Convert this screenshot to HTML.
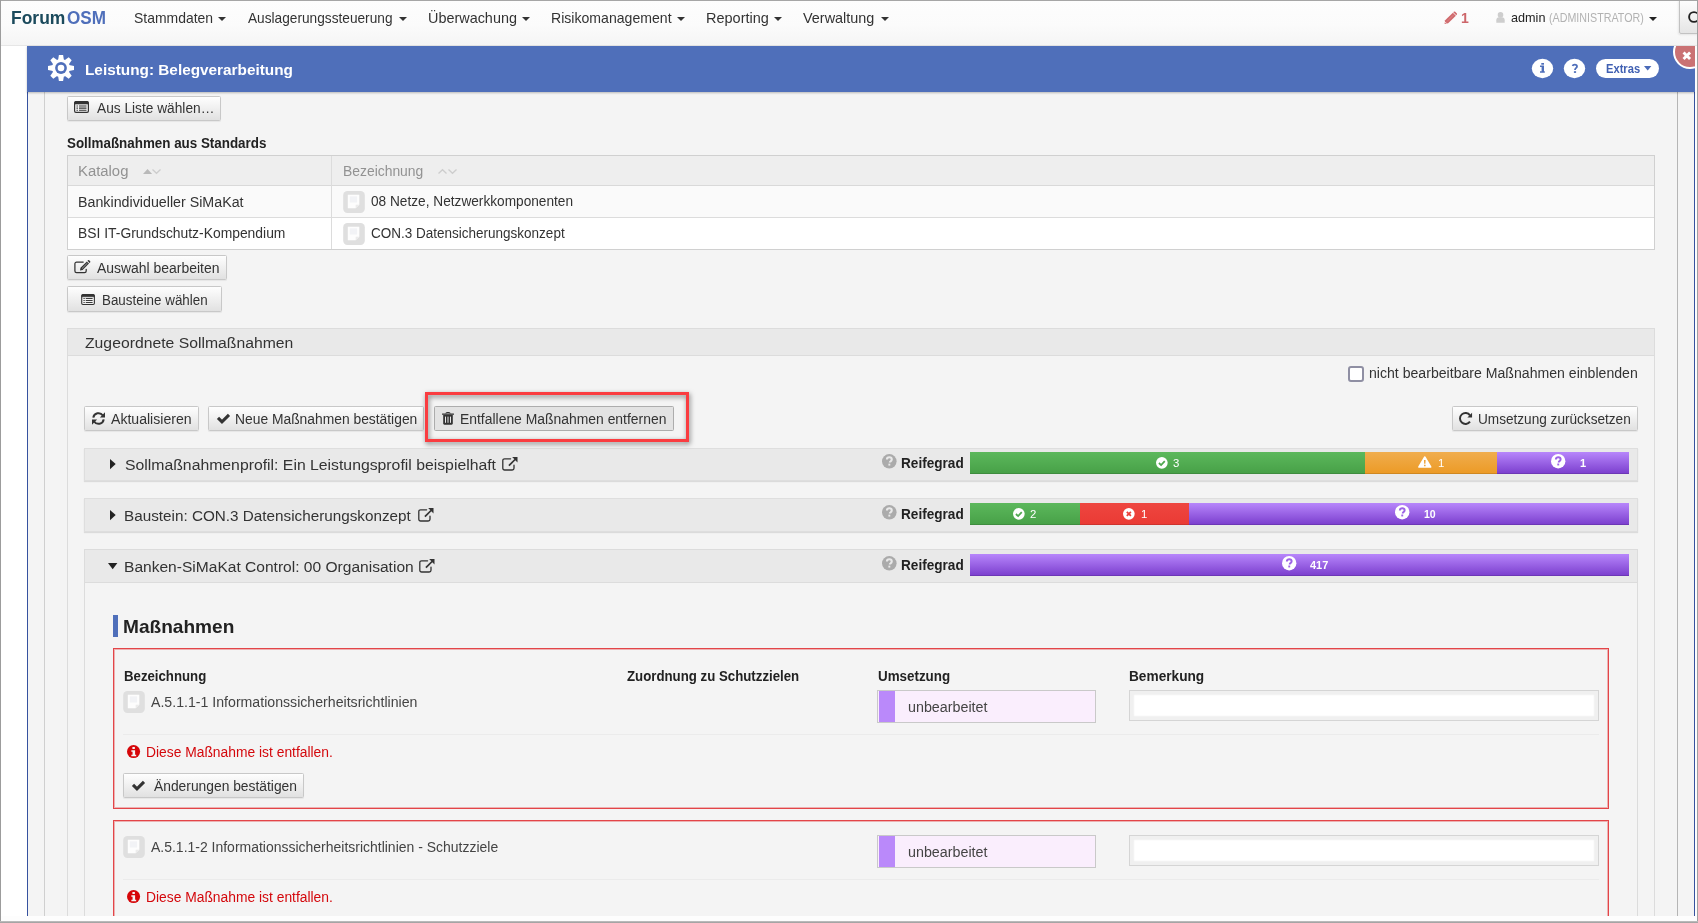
<!DOCTYPE html>
<html lang="de"><head><meta charset="utf-8"><title>ForumOSM - Leistung: Belegverarbeitung</title>
<style>
html,body{margin:0;padding:0}
body{width:1698px;height:923px;position:relative;overflow:hidden;background:#fff;font-family:"Liberation Sans", sans-serif;}
body div,body span,body svg{position:absolute;display:block}
span{white-space:nowrap;line-height:20px;transform-origin:0 0}
svg{overflow:visible}
</style></head>
<body>
<div style="left:0px;top:0px;width:1698px;height:46px;background:linear-gradient(#fdfdfd 0%,#fbfbfb 55%,#f5f5f5 100%);border-bottom:1px solid #e6e6e6;box-sizing:border-box;"></div>
<span style="left:11.03px;top:8px;font-size:18px;font-weight:700;color:#1b4a5c;transform:scaleX(0.9705);">Forum</span>
<span style="left:67.2px;top:8px;font-size:18px;font-weight:700;color:#4f6fba;transform:scaleX(0.9498);">OSM</span>
<span style="left:133.6px;top:8px;font-size:14.4px;color:#333;transform:scaleX(0.9696);">Stammdaten</span>
<svg style="left:218px;top:17px;" width="8" height="4" viewBox="0 0 8 4"><path d="M0 0H8L4 4Z" fill="#333"/></svg>
<span style="left:248.3px;top:8px;font-size:14.4px;color:#333;transform:scaleX(0.9506);">Auslagerungssteuerung</span>
<svg style="left:398.5px;top:17px;" width="8" height="4" viewBox="0 0 8 4"><path d="M0 0H8L4 4Z" fill="#333"/></svg>
<span style="left:427.6px;top:8px;font-size:14.4px;color:#333;transform:scaleX(1.0015);">Überwachung</span>
<svg style="left:521.9px;top:17px;" width="8" height="4" viewBox="0 0 8 4"><path d="M0 0H8L4 4Z" fill="#333"/></svg>
<span style="left:550.92px;top:8px;font-size:14.4px;color:#333;transform:scaleX(0.9789);">Risikomanagement</span>
<svg style="left:677px;top:17px;" width="8" height="4" viewBox="0 0 8 4"><path d="M0 0H8L4 4Z" fill="#333"/></svg>
<span style="left:706.09px;top:8px;font-size:14.4px;color:#333;transform:scaleX(1.0066);">Reporting</span>
<svg style="left:774px;top:17px;" width="8" height="4" viewBox="0 0 8 4"><path d="M0 0H8L4 4Z" fill="#333"/></svg>
<span style="left:803.4px;top:8px;font-size:14.4px;color:#333;transform:scaleX(1.0015);">Verwaltung</span>
<svg style="left:880.9px;top:17px;" width="8" height="4" viewBox="0 0 8 4"><path d="M0 0H8L4 4Z" fill="#333"/></svg>
<svg style="left:1443.8px;top:10.8px;" width="13.5" height="13.5" viewBox="0 0 14 14"><path d="M9.2 1.7 12.3 4.8 4.3 12.8 0.6 13.4 1.2 9.7z" fill="#d0696c"/><path d="M10.1 .8a1.1 1.1 0 0 1 1.5 0l1.6 1.6a1.1 1.1 0 0 1 0 1.5l-.5.5-3.1-3.1z" fill="#d0696c"/><path d="M1 11.2l1.8 1.8" stroke="#fbeaea" stroke-width=".9"/><path d="M3.3 10.7 10.2 3.8" stroke="#e9b3b4" stroke-width=".7" stroke-dasharray="1 .7"/></svg>
<span style="left:1460.65px;top:8px;font-size:14px;font-weight:700;color:#cd666a;transform:scaleX(1.0015);">1</span>
<svg style="left:1495.5px;top:12.4px;" width="9" height="10.8" viewBox="0 0 9 10.8"><circle cx="4.5" cy="2.9" r="2.8" fill="#cecece"/><path d="M.3 10.7V8.3C.3 6.4 1.5 5.3 3 5.3h3c1.5 0 2.7 1.1 2.7 3v2.4z" fill="#cecece"/></svg>
<span style="left:1510.8px;top:8px;font-size:13px;color:#222;transform:scaleX(0.9722);">admin</span>
<span style="left:1549px;top:8px;font-size:12.7px;color:#b2b2b2;transform:scaleX(0.8441);">(ADMINISTRATOR)</span>
<svg style="left:1649px;top:17px;" width="8" height="4" viewBox="0 0 8 4"><path d="M0 0H8L4 4Z" fill="#222"/></svg>
<div style="left:1679px;top:0px;width:20px;height:34px;background:linear-gradient(#fdfdfd,#e5e5e5);border:1px solid #c2c2c2;border-radius:0 0 0 2px;box-sizing:border-box;box-shadow:-1px 1px 2px rgba(0,0,0,.08);"></div>
<svg style="left:1686px;top:9px;" width="16" height="16" viewBox="0 0 16 16"><circle cx="8" cy="8" r="4.9" fill="none" stroke="#222" stroke-width="1.9"/></svg>
<div style="left:27px;top:46px;width:1668px;height:870px;background:#f4f4f4;border-left:1px solid #36529f;border-right:1px solid #36529f;box-sizing:border-box;"></div>
<div style="left:44px;top:92px;width:1px;height:824px;background:#cfcfcf;"></div>
<div style="left:1677px;top:92px;width:1px;height:824px;background:#b5b5b5;"></div>
<div style="left:27px;top:46px;width:1668px;height:46px;background:#4f6fba;box-shadow:0 1px 2px rgba(0,0,0,.25);"></div>
<svg style="left:48.3px;top:55.3px;" width="26" height="26" viewBox="0 0 26 26"><g transform="translate(13 13)" fill="#fff"><path d="M-2.9 -8L-2.1 -13H2.1L2.9 -8z" transform="rotate(0)"/><path d="M-2.9 -8L-2.1 -13H2.1L2.9 -8z" transform="rotate(45)"/><path d="M-2.9 -8L-2.1 -13H2.1L2.9 -8z" transform="rotate(90)"/><path d="M-2.9 -8L-2.1 -13H2.1L2.9 -8z" transform="rotate(135)"/><path d="M-2.9 -8L-2.1 -13H2.1L2.9 -8z" transform="rotate(180)"/><path d="M-2.9 -8L-2.1 -13H2.1L2.9 -8z" transform="rotate(225)"/><path d="M-2.9 -8L-2.1 -13H2.1L2.9 -8z" transform="rotate(270)"/><path d="M-2.9 -8L-2.1 -13H2.1L2.9 -8z" transform="rotate(315)"/><circle r="9.1"/><circle r="5.9" fill="#4f6fba"/><circle r="3.3" fill="#fff"/></g></svg>
<span style="left:85.31px;top:60px;font-size:15.5px;font-weight:700;color:#fff;transform:scaleX(0.9896);">Leistung: Belegverarbeitung</span>
<svg style="left:1531px;top:58px" width="23" height="21" viewBox="0 0 23 21"><ellipse cx="11.5" cy="10.5" rx="10.7" ry="9.7" fill="#fff"/><rect x="10.3" y="5" width="2.7" height="1.7" fill="#4f6fba"/><path d="M9 7.5h4v5.7h.8v1.6H9v-1.6h1.6V9.1H9z" fill="#4f6fba"/></svg>
<svg style="left:1563px;top:58px" width="23" height="21" viewBox="0 0 23 21"><ellipse cx="11.5" cy="10.5" rx="10.7" ry="9.7" fill="#fff"/><path d="M9.6 8c.2-.9 1-1.3 2.1-1.3 1.4 0 2.3.7 2.3 1.7 0 .8-.5 1.2-1.1 1.7-.6.5-.9.9-.9 1.8" fill="none" stroke="#4f6fba" stroke-width="1.8"/><rect x="10.9" y="13.2" width="2.2" height="1.7" fill="#4f6fba"/></svg>
<div style="left:1595.7px;top:58.6px;width:63.4px;height:19.5px;background:#fff;border-radius:10px;"></div>
<span style="left:1605.7px;top:59px;font-size:12.4px;font-weight:700;color:#4060b2;transform:scaleX(0.9001);">Extras</span>
<svg style="left:1643.7px;top:66.1px;" width="7.4" height="4.6" viewBox="0 0 7.4 4.6"><path d="M0 0H7.4L3.7 4.6Z" fill="#4a6ab8"/></svg>
<div style="left:1665px;top:46px;width:30px;height:30px;overflow:hidden;"><div style="left:8.1px;top:-10.9px;width:33.8px;height:33.8px;border-radius:50%;background:#ca7274;border:2px solid #fff;box-sizing:border-box;"></div><svg style="left:16.9px;top:5.2px" width="9.6" height="9.6" viewBox="0 0 10 10"><path d="M1.6 1.6 8.4 8.4M8.4 1.6 1.6 8.4" stroke="#fff" stroke-width="3"/></svg></div>
<div style="left:67px;top:96px;width:154px;height:25px;background:linear-gradient(#fefefe,#e1e1e1);border:1px solid #c8c8c8;box-shadow:0 1px 1px rgba(0,0,0,.06);border-radius:1.5px;box-sizing:border-box;"></div>
<svg style="left:74.1px;top:101.2px;" width="15" height="12" viewBox="0 0 15 12"><rect x="0.6" y="0.6" width="13.8" height="10.8" rx="1.3" fill="#f4f4f4" stroke="#333" stroke-width="1.2"/><path d="M.6 3V1.9A1.3 1.3 0 0 1 1.9 .6h11.2a1.3 1.3 0 0 1 1.3 1.3V3z" fill="#333" stroke="#333" stroke-width=".6"/><path d="M2.5 4.9h1.4M5 4.9h7.5M2.5 7.1h1.4M5 7.1h7.5M2.5 9.3h1.4M5 9.3h7.5" stroke="#333" stroke-width="1.05"/></svg>
<span style="left:96.7px;top:99px;font-size:13.8px;color:#333;transform:scaleX(0.9939);">Aus Liste wählen…</span>
<span style="left:67.3px;top:134px;font-size:13.8px;font-weight:700;color:#222;transform:scaleX(0.9704);">Sollmaßnahmen aus Standards</span>
<div style="left:67px;top:155px;width:1588px;height:95px;border:1px solid #d0d0d0;box-sizing:border-box;background:#fff;"></div>
<div style="left:68px;top:156px;width:1586px;height:30px;background:#eeeeee;border-bottom:1px solid #d9d9d9;box-sizing:border-box;"></div>
<div style="left:68px;top:186px;width:1586px;height:31px;background:#fafafa;"></div>
<div style="left:68px;top:217px;width:1586px;height:1px;background:#dcdcdc;"></div>
<div style="left:331px;top:156px;width:1px;height:93px;background:#dcdcdc;"></div>
<span style="left:78.32px;top:162px;font-size:13.8px;color:#929292;transform:scaleX(1.0771);">Katalog</span>
<span style="left:342.89px;top:162px;font-size:13.8px;color:#929292;transform:scaleX(1.0064);">Bezeichnung</span>
<svg style="left:142.6px;top:168.8px;" width="9.1" height="5.1" viewBox="0 0 9 5"><path d="M0 5 4.5 0 9 5z" fill="#b9b9b9"/></svg>
<svg style="left:152.3px;top:168.7px;" width="9" height="5" viewBox="0 0 9 5"><path d="M.5 .5 4.5 4.3 8.5 .5" fill="none" stroke="#cdcdcd" stroke-width="1.3"/></svg>
<svg style="left:438px;top:168.7px;" width="9" height="5" viewBox="0 0 9 5"><path d="M.5 4.5 4.5 .7 8.5 4.5" fill="none" stroke="#cdcdcd" stroke-width="1.3"/></svg>
<svg style="left:448px;top:168.7px;" width="9" height="5" viewBox="0 0 9 5"><path d="M.5 .5 4.5 4.3 8.5 .5" fill="none" stroke="#cdcdcd" stroke-width="1.3"/></svg>
<span style="left:78.47px;top:193px;font-size:13.8px;color:#333;transform:scaleX(1.0329);">Bankindividueller SiMaKat</span>
<span style="left:78.39px;top:224px;font-size:13.8px;color:#333;transform:scaleX(1.0055);">BSI IT-Grundschutz-Kompendium</span>
<svg style="left:343px;top:190.8px" width="22" height="22" viewBox="0 0 22 22"><rect x=".2" y="0" width="21.6" height="22" rx="4.2" fill="#dfdfdf"/><path d="M4.8 3.7h11.5v10l-3.7 3.6H4.8z" fill="#fdfdfd"/><rect x="6.8" y="5.3" width="7.3" height="6.2" fill="#f2f3f6"/><path d="M12.6 17.3v-3.6h3.7z" fill="#ececec"/></svg>
<svg style="left:343px;top:222.6px" width="22" height="22" viewBox="0 0 22 22"><rect x=".2" y="0" width="21.6" height="22" rx="4.2" fill="#dfdfdf"/><path d="M4.8 3.7h11.5v10l-3.7 3.6H4.8z" fill="#fdfdfd"/><rect x="6.8" y="5.3" width="7.3" height="6.2" fill="#f2f3f6"/><path d="M12.6 17.3v-3.6h3.7z" fill="#ececec"/></svg>
<span style="left:370.9px;top:192px;font-size:13.8px;color:#333;transform:scaleX(0.9905);">08 Netze, Netzwerkkomponenten</span>
<span style="left:370.9px;top:224px;font-size:13.8px;color:#333;transform:scaleX(0.9787);">CON.3 Datensicherungskonzept</span>
<div style="left:67px;top:255px;width:160px;height:25px;background:linear-gradient(#fefefe,#e1e1e1);border:1px solid #c8c8c8;box-shadow:0 1px 1px rgba(0,0,0,.06);border-radius:1.5px;box-sizing:border-box;"></div>
<svg style="left:74px;top:260.2px;" width="16" height="14" viewBox="0 0 16 14"><path d="M12.2 9.3v1.7a1.7 1.7 0 0 1-1.7 1.7H2.6A1.7 1.7 0 0 1 .9 11V3.8a1.7 1.7 0 0 1 1.7-1.7h6.6" fill="none" stroke="#333" stroke-width="1.25" stroke-linecap="round"/><path d="M6 10.4l.5-2.6L12.9 1.4l2.1 2.1L8.6 9.9z" fill="#333"/><path d="M13.5.8l.5-.5a.8.8 0 0 1 1.1 0l1 1a.8.8 0 0 1 0 1.1l-.5.5z" fill="#333"/><path d="M7.9 8.6 13.5 3" stroke="#e9e9e9" stroke-width=".6"/></svg>
<span style="left:96.7px;top:259px;font-size:13.8px;color:#333;transform:scaleX(1.0107);">Auswahl bearbeiten</span>
<div style="left:67px;top:286px;width:155px;height:26px;background:linear-gradient(#fefefe,#e1e1e1);border:1px solid #c8c8c8;box-shadow:0 1px 1px rgba(0,0,0,.06);border-radius:1.5px;box-sizing:border-box;"></div>
<svg style="left:80.9px;top:294.1px;" width="14.1" height="11" viewBox="0 0 15 12"><rect x="0.6" y="0.6" width="13.8" height="10.8" rx="1.3" fill="#f4f4f4" stroke="#333" stroke-width="1.2"/><path d="M.6 3V1.9A1.3 1.3 0 0 1 1.9 .6h11.2a1.3 1.3 0 0 1 1.3 1.3V3z" fill="#333" stroke="#333" stroke-width=".6"/><path d="M2.5 4.9h1.4M5 4.9h7.5M2.5 7.1h1.4M5 7.1h7.5M2.5 9.3h1.4M5 9.3h7.5" stroke="#333" stroke-width="1.05"/></svg>
<span style="left:101.63px;top:291px;font-size:13.8px;color:#333;transform:scaleX(0.9697);">Bausteine wählen</span>
<div style="left:67px;top:328px;width:1588px;height:600px;border:1px solid #dcdcdc;box-sizing:border-box;"></div>
<div style="left:68px;top:329px;width:1586px;height:27px;background:#e9e9e9;border-bottom:1px solid #dcdcdc;box-sizing:border-box;"></div>
<span style="left:84.9px;top:333px;font-size:15.2px;color:#333;transform:scaleX(1.0365);">Zugeordnete Sollmaßnahmen</span>
<div style="left:1347.5px;top:366px;width:16px;height:16px;border:2px solid #8f8fa3;border-radius:3px;background:#fff;box-sizing:border-box;"></div>
<span style="left:1369.1px;top:364px;font-size:13.8px;color:#333;transform:scaleX(1.0217);">nicht bearbeitbare Maßnahmen einblenden</span>
<div style="left:84px;top:406px;width:115px;height:25px;background:linear-gradient(#fefefe,#e1e1e1);border:1px solid #c8c8c8;box-shadow:0 1px 1px rgba(0,0,0,.06);border-radius:1.5px;box-sizing:border-box;"></div>
<svg style="left:91.8px;top:411.9px;" width="13" height="13" viewBox="0 0 13 13"><path d="M1.3 5.7A5.3 5.3 0 0 1 10.9 3.5" fill="none" stroke="#333" stroke-width="2"/><path d="M11.7 7.3A5.3 5.3 0 0 1 2.1 9.5" fill="none" stroke="#333" stroke-width="2"/><path d="M13 .3v5.1H7.9z" fill="#333"/><path d="M0 12.7V7.6h5.1z" fill="#333"/></svg>
<span style="left:110.6px;top:410px;font-size:13.8px;color:#333;transform:scaleX(1.0202);">Aktualisieren</span>
<div style="left:208px;top:406px;width:216px;height:25px;background:linear-gradient(#fefefe,#e1e1e1);border:1px solid #c8c8c8;box-shadow:0 1px 1px rgba(0,0,0,.06);border-radius:1.5px;box-sizing:border-box;"></div>
<svg style="left:216.9px;top:413.8px;" width="13.2" height="10.4" viewBox="0 0 13.2 10.4"><path d="M1 3.8 5 7.8 12 .9" fill="none" stroke="#333" stroke-width="3.1"/></svg>
<span style="left:234.7px;top:410px;font-size:13.8px;color:#333;transform:scaleX(1.0028);">Neue Maßnahmen bestätigen</span>
<div style="left:434px;top:406px;width:240px;height:25px;background:#e3e3e3;border:1px solid #adadad;border-radius:1.5px;box-sizing:border-box;"></div>
<svg style="left:441.5px;top:412px;" width="12" height="13" viewBox="0 0 12 13"><path d="M4 1.6V1c0-.3.2-.5.5-.5h3c.3 0 .5.2.5.5v.600" fill="none" stroke="#333" stroke-width="1"/><rect x="0" y="1.5" width="12" height="1.3" rx=".3" fill="#333"/><path d="M1.2 2.8h9.6v8.8c0 .7-.5 1.2-1.2 1.2H2.4c-.7 0-1.2-.5-1.2-1.2z" fill="#333"/><path d="M3.5 4.6v6.2M6 4.6v6.2M8.5 4.6v6.2" stroke="#e8e8e8" stroke-width="1"/></svg>
<span style="left:460.49px;top:410px;font-size:13.8px;color:#333;transform:scaleX(1.0078);">Entfallene Maßnahmen entfernen</span>
<div style="left:1452px;top:406px;width:186px;height:25px;background:linear-gradient(#fefefe,#e1e1e1);border:1px solid #c8c8c8;box-shadow:0 1px 1px rgba(0,0,0,.06);border-radius:1.5px;box-sizing:border-box;"></div>
<svg style="left:1459px;top:411.9px;" width="13.2" height="13.2" viewBox="0 0 13.2 13.2"><path d="M11 9.65A5.5 5.5 0 1 1 11 3.35" fill="none" stroke="#333" stroke-width="1.95"/><path d="M13.1 .8v4.7H8.4z" fill="#333"/></svg>
<span style="left:1478.11px;top:410px;font-size:13.8px;color:#333;transform:scaleX(0.9861);">Umsetzung zurücksetzen</span>
<div style="left:84px;top:448px;width:1554px;height:33px;background:#e9e9e9;border:1px solid #dedede;box-sizing:border-box;box-shadow:0 1px 1px rgba(0,0,0,.10);"></div>
<svg style="left:110px;top:459px;" width="5.7" height="10.2" viewBox="0 0 5.7 10.2"><path d="M0 0V10.2L5.7 5.1Z" fill="#222"/></svg>
<span style="left:124.8px;top:455px;font-size:15.2px;color:#333;transform:scaleX(1.0389);">Sollmaßnahmenprofil: Ein Leistungsprofil beispielhaft</span>
<svg style="left:502px;top:457px;" width="16" height="14" viewBox="0 0 16 14"><path d="M12 8.2v3a1.8 1.8 0 0 1-1.8 1.8H2.6A1.8 1.8 0 0 1 .8 11.2V3.6A1.8 1.8 0 0 1 2.6 1.8h6" fill="none" stroke="#333" stroke-width="1.3" stroke-linecap="round"/><path d="M6.9 8.7 13.6 2" stroke="#333" stroke-width="1.7"/><path d="M10.2 .1h5.3v5.3z" fill="#333"/></svg>
<svg style="left:881.8px;top:453.5px" width="14.6" height="14.6" viewBox="0 0 16 16"><circle cx="8" cy="8" r="8" fill="#ababab"/><path d="M5.4 6.1c0-1.6 1.2-2.5 2.7-2.5s2.6.9 2.6 2.3c0 1.1-.6 1.6-1.3 2.1-.6.4-.8.7-.8 1.4" fill="none" stroke="#e9e9e9" stroke-width="2.3"/><rect x="7" y="10.6" width="2.1" height="2.1" fill="#e9e9e9"/></svg>
<span style="left:901.4px;top:454px;font-size:13.8px;font-weight:700;color:#222;transform:scaleX(0.9856);">Reifegrad</span>
<div style="left:84px;top:498px;width:1554px;height:34px;background:#e9e9e9;border:1px solid #dedede;box-sizing:border-box;box-shadow:0 1px 1px rgba(0,0,0,.10);"></div>
<svg style="left:110px;top:510px;" width="5.7" height="10.2" viewBox="0 0 5.7 10.2"><path d="M0 0V10.2L5.7 5.1Z" fill="#222"/></svg>
<span style="left:123.79px;top:506px;font-size:15.2px;color:#333;transform:scaleX(1.0052);">Baustein: CON.3 Datensicherungskonzept</span>
<svg style="left:418px;top:508px;" width="16" height="14" viewBox="0 0 16 14"><path d="M12 8.2v3a1.8 1.8 0 0 1-1.8 1.8H2.6A1.8 1.8 0 0 1 .8 11.2V3.6A1.8 1.8 0 0 1 2.6 1.8h6" fill="none" stroke="#333" stroke-width="1.3" stroke-linecap="round"/><path d="M6.9 8.7 13.6 2" stroke="#333" stroke-width="1.7"/><path d="M10.2 .1h5.3v5.3z" fill="#333"/></svg>
<svg style="left:881.8px;top:504.5px" width="14.6" height="14.6" viewBox="0 0 16 16"><circle cx="8" cy="8" r="8" fill="#ababab"/><path d="M5.4 6.1c0-1.6 1.2-2.5 2.7-2.5s2.6.9 2.6 2.3c0 1.1-.6 1.6-1.3 2.1-.6.4-.8.7-.8 1.4" fill="none" stroke="#e9e9e9" stroke-width="2.3"/><rect x="7" y="10.6" width="2.1" height="2.1" fill="#e9e9e9"/></svg>
<span style="left:901.4px;top:505px;font-size:13.8px;font-weight:700;color:#222;transform:scaleX(0.9856);">Reifegrad</span>
<div style="left:84px;top:549px;width:1554px;height:400px;border:1px solid #dcdcdc;box-sizing:border-box;"></div>
<div style="left:85px;top:550px;width:1552px;height:33px;background:#e9e9e9;border-bottom:1px solid #dcdcdc;box-sizing:border-box;"></div>
<svg style="left:108px;top:563px;" width="9.4" height="6.2" viewBox="0 0 9.4 6.2"><path d="M0 0H9.4L4.7 6.2Z" fill="#222"/></svg>
<span style="left:123.78px;top:557px;font-size:15.2px;color:#333;transform:scaleX(1.0243);">Banken-SiMaKat Control: 00 Organisation</span>
<svg style="left:419px;top:559px;" width="16" height="14" viewBox="0 0 16 14"><path d="M12 8.2v3a1.8 1.8 0 0 1-1.8 1.8H2.6A1.8 1.8 0 0 1 .8 11.2V3.6A1.8 1.8 0 0 1 2.6 1.8h6" fill="none" stroke="#333" stroke-width="1.3" stroke-linecap="round"/><path d="M6.9 8.7 13.6 2" stroke="#333" stroke-width="1.7"/><path d="M10.2 .1h5.3v5.3z" fill="#333"/></svg>
<svg style="left:881.8px;top:555.5px" width="14.6" height="14.6" viewBox="0 0 16 16"><circle cx="8" cy="8" r="8" fill="#ababab"/><path d="M5.4 6.1c0-1.6 1.2-2.5 2.7-2.5s2.6.9 2.6 2.3c0 1.1-.6 1.6-1.3 2.1-.6.4-.8.7-.8 1.4" fill="none" stroke="#e9e9e9" stroke-width="2.3"/><rect x="7" y="10.6" width="2.1" height="2.1" fill="#e9e9e9"/></svg>
<span style="left:901.4px;top:556px;font-size:13.8px;font-weight:700;color:#222;transform:scaleX(0.9856);">Reifegrad</span>
<div style="left:970px;top:452px;width:395px;height:22px;background:linear-gradient(#5cb85c,#47a047);box-shadow:inset 0 -1px 0 rgba(0,0,0,.12);"></div>
<div style="left:1365px;top:452px;width:132px;height:22px;background:linear-gradient(#f0ad4e,#ec9a25);box-shadow:inset 0 -1px 0 rgba(0,0,0,.12);"></div>
<div style="left:1497px;top:452px;width:132px;height:22px;background:linear-gradient(#b786fb,#7a3dcd);box-shadow:inset 0 -1px 0 rgba(0,0,0,.12);"></div>
<svg style="left:1155.5px;top:456.5px" width="11.7" height="11.7" viewBox="0 0 16 16"><circle cx="8" cy="8" r="8" fill="#fff"/><path d="M4 8.2 7 11 12 5.6" fill="none" stroke="#4fa94f" stroke-width="2.4"/></svg>
<span style="left:1173.25px;top:453px;font-size:11.4px;color:#fff;transform:scaleX(1.0015);">3</span>
<svg style="left:1418.2px;top:456px" width="13.6" height="12" viewBox="0 0 16 14"><path d="M8 .3c.5 0 .9.3 1.1.7l6.6 11.3c.4.8-.1 1.5-1 1.5H1.3c-.9 0-1.4-.7-1-1.5L6.9 1C7.1.6 7.5.3 8 .3z" fill="#fff"/><path d="M7 4.6h2l-.3 4.6H7.3z" fill="#eea43a"/><rect x="7.1" y="10.2" width="1.8" height="1.8" fill="#eea43a"/></svg>
<span style="left:1438.3px;top:453px;font-size:11.4px;color:#fff;transform:scaleX(1.0015);">1</span>
<svg style="left:1551.2px;top:454.3px" width="14.4" height="14.4" viewBox="0 0 16 16"><circle cx="8" cy="8" r="8" fill="#fff"/><path d="M5.4 6.1c0-1.6 1.2-2.5 2.7-2.5s2.6.9 2.6 2.3c0 1.1-.6 1.6-1.3 2.1-.6.4-.8.7-.8 1.4" fill="none" stroke="#9d63e6" stroke-width="2.2"/><rect x="7" y="10.6" width="2.1" height="2.1" fill="#9d63e6"/></svg>
<span style="left:1580.1px;top:453px;font-size:11px;font-weight:700;color:#fff;transform:scaleX(1.0015);">1</span>
<div style="left:970px;top:503px;width:110px;height:22px;background:linear-gradient(#5cb85c,#47a047);box-shadow:inset 0 -1px 0 rgba(0,0,0,.12);"></div>
<div style="left:1080px;top:503px;width:109px;height:22px;background:linear-gradient(#ee4640,#ea3a34);box-shadow:inset 0 -1px 0 rgba(0,0,0,.12);"></div>
<div style="left:1189px;top:503px;width:440px;height:22px;background:linear-gradient(#b786fb,#7a3dcd);box-shadow:inset 0 -1px 0 rgba(0,0,0,.12);"></div>
<svg style="left:1012.8px;top:507.5px" width="11.7" height="11.7" viewBox="0 0 16 16"><circle cx="8" cy="8" r="8" fill="#fff"/><path d="M4 8.2 7 11 12 5.6" fill="none" stroke="#4fa94f" stroke-width="2.4"/></svg>
<span style="left:1030.3px;top:504px;font-size:11.4px;color:#fff;transform:scaleX(1.0015);">2</span>
<svg style="left:1122.9px;top:507.5px" width="11.7" height="11.7" viewBox="0 0 16 16"><circle cx="8" cy="8" r="8" fill="#fff"/><path d="M5.2 5.2 10.8 10.8M10.8 5.2 5.2 10.8" fill="none" stroke="#ec3f39" stroke-width="2.4"/></svg>
<span style="left:1140.6px;top:504px;font-size:11.4px;color:#fff;transform:scaleX(1.0015);">1</span>
<svg style="left:1394.6px;top:505.3px" width="14.4" height="14.4" viewBox="0 0 16 16"><circle cx="8" cy="8" r="8" fill="#fff"/><path d="M5.4 6.1c0-1.6 1.2-2.5 2.7-2.5s2.6.9 2.6 2.3c0 1.1-.6 1.6-1.3 2.1-.6.4-.8.7-.8 1.4" fill="none" stroke="#9d63e6" stroke-width="2.2"/><rect x="7" y="10.6" width="2.1" height="2.1" fill="#9d63e6"/></svg>
<span style="left:1423.6px;top:504px;font-size:11px;font-weight:700;color:#fff;transform:scaleX(0.9573);">10</span>
<div style="left:970px;top:554px;width:659px;height:22px;background:linear-gradient(#b786fb,#7a3dcd);box-shadow:inset 0 -1px 0 rgba(0,0,0,.12);"></div>
<svg style="left:1281.5px;top:556.3px" width="14.4" height="14.4" viewBox="0 0 16 16"><circle cx="8" cy="8" r="8" fill="#fff"/><path d="M5.4 6.1c0-1.6 1.2-2.5 2.7-2.5s2.6.9 2.6 2.3c0 1.1-.6 1.6-1.3 2.1-.6.4-.8.7-.8 1.4" fill="none" stroke="#9d63e6" stroke-width="2.2"/><rect x="7" y="10.6" width="2.1" height="2.1" fill="#9d63e6"/></svg>
<span style="left:1309.8px;top:555px;font-size:11px;font-weight:700;color:#fff;transform:scaleX(0.9981);">417</span>
<div style="left:113px;top:615px;width:5px;height:22px;background:#4f6fba;"></div>
<span style="left:123.27px;top:617px;font-size:18.6px;font-weight:700;color:#222;transform:scaleX(1.026);">Maßnahmen</span>
<div style="left:113px;top:648px;width:1496px;height:161px;border:1px solid #e34548;box-sizing:border-box;box-shadow:inset 0 0 0 1px rgba(227,69,72,.38);"></div>
<span style="left:124.2px;top:667px;font-size:13.8px;font-weight:700;color:#222;transform:scaleX(0.9576);">Bezeichnung</span>
<span style="left:626.7px;top:667px;font-size:13.8px;font-weight:700;color:#222;transform:scaleX(0.9602);">Zuordnung zu Schutzzielen</span>
<span style="left:878px;top:667px;font-size:13.8px;font-weight:700;color:#222;transform:scaleX(0.9699);">Umsetzung</span>
<span style="left:1129.4px;top:667px;font-size:13.8px;font-weight:700;color:#222;transform:scaleX(0.9911);">Bemerkung</span>
<svg style="left:123px;top:690.8px" width="22" height="22" viewBox="0 0 22 22"><rect x=".2" y="0" width="21.6" height="22" rx="4.2" fill="#dfdfdf"/><path d="M4.8 3.7h11.5v10l-3.7 3.6H4.8z" fill="#fdfdfd"/><rect x="6.8" y="5.3" width="7.3" height="6.2" fill="#f2f3f6"/><path d="M12.6 17.3v-3.6h3.7z" fill="#ececec"/></svg>
<span style="left:150.9px;top:693px;font-size:13.8px;color:#444;transform:scaleX(1.0247);">A.5.1.1-1 Informationssicherheitsrichtlinien</span>
<div style="left:877px;top:690px;width:219px;height:33px;border:1px solid #c9c9c9;background:#faeefd;box-sizing:border-box;"></div>
<div style="left:878.5px;top:691px;width:16px;height:31px;background:#ba89fa;"></div>
<span style="left:908.2px;top:698px;font-size:13.8px;color:#444;transform:scaleX(1.0367);">unbearbeitet</span>
<div style="left:1129px;top:690px;width:470px;height:31px;border:1px solid #d5d5d5;background:#fff;box-sizing:border-box;box-shadow:inset 0 0 1.5px 4px #f0f0f0;"></div>
<div style="left:123px;top:734.0999999999999px;width:1476px;height:1px;background:#ebebeb;"></div>
<svg style="left:126.8px;top:744.8999999999999px" width="13.1" height="13.1" viewBox="0 0 16 16"><circle cx="8" cy="8" r="8" fill="#d60609"/><rect x="6.6" y="2.4" width="3" height="2.5" fill="#f4f4f4"/><path d="M5.3 6.3h4.6v5.5h1.3v2H5.3v-2h1.5V8.3H5.3z" fill="#f4f4f4"/></svg>
<span style="left:145.9px;top:743px;font-size:13.8px;color:#d4080c;transform:scaleX(1.0026);">Diese Maßnahme ist entfallen.</span>
<div style="left:123px;top:773px;width:181px;height:25px;background:linear-gradient(#fefefe,#e1e1e1);border:1px solid #c8c8c8;box-shadow:0 1px 1px rgba(0,0,0,.06);border-radius:1.5px;box-sizing:border-box;"></div>
<svg style="left:131.9px;top:780.8px;" width="13.2" height="10.4" viewBox="0 0 13.2 10.4"><path d="M1 3.8 5 7.8 12 .9" fill="none" stroke="#333" stroke-width="3.1"/></svg>
<span style="left:153.5px;top:777px;font-size:13.8px;color:#333;transform:scaleX(1.002);">Änderungen bestätigen</span>
<div style="left:113px;top:820px;width:1496px;height:161px;border:1px solid #e34548;box-sizing:border-box;box-shadow:inset 0 0 0 1px rgba(227,69,72,.38);"></div>
<svg style="left:123px;top:835.8px" width="22" height="22" viewBox="0 0 22 22"><rect x=".2" y="0" width="21.6" height="22" rx="4.2" fill="#dfdfdf"/><path d="M4.8 3.7h11.5v10l-3.7 3.6H4.8z" fill="#fdfdfd"/><rect x="6.8" y="5.3" width="7.3" height="6.2" fill="#f2f3f6"/><path d="M12.6 17.3v-3.6h3.7z" fill="#ececec"/></svg>
<span style="left:150.9px;top:838px;font-size:13.8px;color:#444;transform:scaleX(1.0128);">A.5.1.1-2 Informationssicherheitsrichtlinien - Schutzziele</span>
<div style="left:877px;top:835px;width:219px;height:33px;border:1px solid #c9c9c9;background:#faeefd;box-sizing:border-box;"></div>
<div style="left:878.5px;top:836px;width:16px;height:31px;background:#ba89fa;"></div>
<span style="left:908.2px;top:843px;font-size:13.8px;color:#444;transform:scaleX(1.0367);">unbearbeitet</span>
<div style="left:1129px;top:835px;width:470px;height:31px;border:1px solid #d5d5d5;background:#fff;box-sizing:border-box;box-shadow:inset 0 0 1.5px 4px #f0f0f0;"></div>
<div style="left:123px;top:879.0999999999999px;width:1476px;height:1px;background:#ebebeb;"></div>
<svg style="left:126.8px;top:889.8999999999999px" width="13.1" height="13.1" viewBox="0 0 16 16"><circle cx="8" cy="8" r="8" fill="#d60609"/><rect x="6.6" y="2.4" width="3" height="2.5" fill="#f4f4f4"/><path d="M5.3 6.3h4.6v5.5h1.3v2H5.3v-2h1.5V8.3H5.3z" fill="#f4f4f4"/></svg>
<span style="left:145.9px;top:888px;font-size:13.8px;color:#d4080c;transform:scaleX(1.0026);">Diese Maßnahme ist entfallen.</span>
<div style="left:0px;top:916px;width:1698px;height:7px;background:#fdfdfd;"></div>
<div style="left:1695px;top:46px;width:3px;height:877px;background:#fdfdfd;"></div>
<div style="left:0px;top:0px;width:1698px;height:1px;background:#a6a6a6;"></div>
<div style="left:0px;top:0px;width:1px;height:923px;background:#9c9c9c;"></div>
<div style="left:1697px;top:0px;width:1px;height:923px;background:#a0a0a0;"></div>
<div style="left:0px;top:921px;width:1698px;height:2px;background:linear-gradient(#c4c4c4,#9a9a9a);"></div>
<div style="left:425px;top:392px;width:264px;height:50px;border:3px solid #fa3c40;box-sizing:border-box;filter:drop-shadow(1.5px 2px 2.5px rgba(0,0,0,.5));"></div>
</body></html>
